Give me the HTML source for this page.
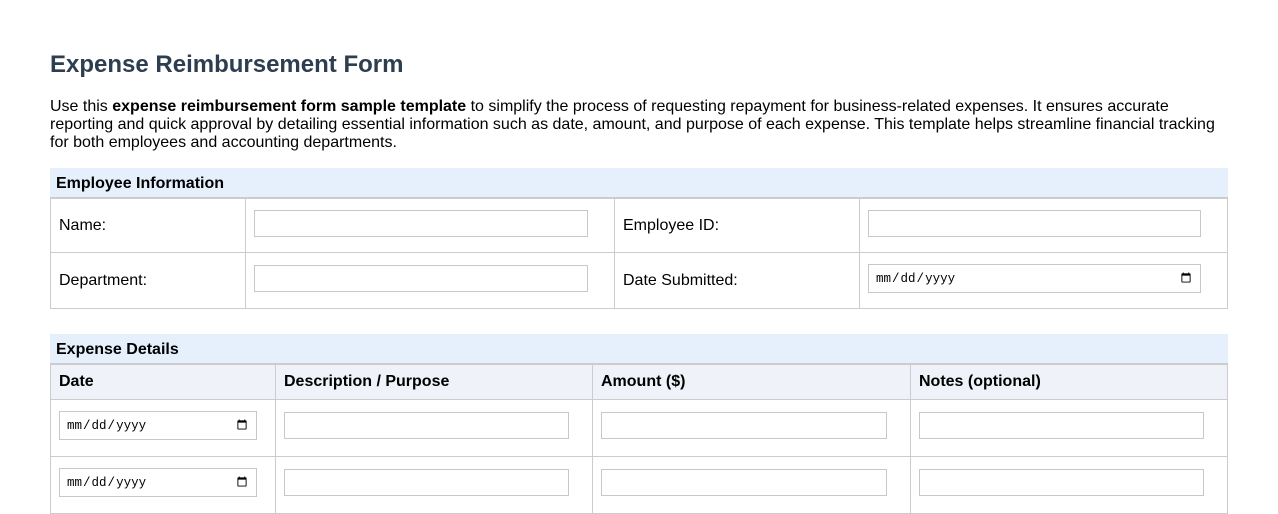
<!DOCTYPE html>
<html><head><meta charset="utf-8"><style>
*{box-sizing:border-box}
body{margin:0;background:#fff;font-family:"Liberation Sans",Arial,sans-serif;color:#000;width:1278px;height:501px;overflow:hidden;position:relative}
h1{position:absolute;left:50px;top:49px;margin:0;font-size:24px;font-weight:bold;color:#2c3e50;line-height:32px}
p{position:absolute;left:50px;top:98px;margin:0;font-size:16px;line-height:18px;white-space:nowrap}
.sec{position:absolute;left:50px;width:1178px;height:30px;background:#e6f0fd;font-weight:bold;font-size:16px;padding:7px 6px 5px;line-height:18px;border-bottom:1px solid #ccc}
.cell{position:absolute;border:1px solid #ccc;font-size:16px;line-height:18px}
.lbl{padding-left:8px;display:flex;align-items:center}
.hd{background:#eff3f9;font-weight:bold;padding-left:8px;display:flex;align-items:center}
.in{position:absolute;border:1px solid #c8c8c8;background:#fff}
input[type=date]{position:absolute;border:1px solid #c8c8c8;background:#fff;font-family:"Liberation Mono",monospace;font-size:12.5px;padding:0 6px;margin:0;color:#000}
</style></head><body>
<h1>Expense Reimbursement Form</h1>
<p>Use this <b>expense reimbursement form sample template</b> to simplify the process of requesting repayment for business-related expenses. It ensures accurate<br>reporting and quick approval by detailing essential information such as date, amount, and purpose of each expense. This template helps streamline financial tracking<br>for both employees and accounting departments.</p>

<div class="sec" style="top:168px">Employee Information</div>
<div class="cell lbl" style="left:50px;top:198px;width:196px;height:55px">Name:</div>
<div class="cell" style="left:245px;top:198px;width:370px;height:55px"></div>
<div class="cell lbl" style="left:614px;top:198px;width:246px;height:55px">Employee ID:</div>
<div class="cell" style="left:859px;top:198px;width:369px;height:55px"></div>
<div class="cell lbl" style="left:50px;top:252px;width:196px;height:57px">Department:</div>
<div class="cell" style="left:245px;top:252px;width:370px;height:57px"></div>
<div class="cell lbl" style="left:614px;top:252px;width:246px;height:57px">Date Submitted:</div>
<div class="cell" style="left:859px;top:252px;width:369px;height:57px"></div>
<div class="in" style="left:254px;top:210px;width:334px;height:27px"></div>
<div class="in" style="left:868px;top:210px;width:333px;height:27px"></div>
<div class="in" style="left:254px;top:265px;width:334px;height:27px"></div>
<input type="date" style="left:868px;top:264px;width:333px;height:29px">

<div class="sec" style="top:334px">Expense Details</div>
<div class="cell hd" style="left:50px;top:364px;width:226px;height:36px">Date</div>
<div class="cell hd" style="left:275px;top:364px;width:318px;height:36px">Description / Purpose</div>
<div class="cell hd" style="left:592px;top:364px;width:319px;height:36px">Amount ($)</div>
<div class="cell hd" style="left:910px;top:364px;width:318px;height:36px">Notes (optional)</div>
<div class="cell" style="left:50px;top:399px;width:226px;height:58px"></div>
<div class="cell" style="left:275px;top:399px;width:318px;height:58px"></div>
<div class="cell" style="left:592px;top:399px;width:319px;height:58px"></div>
<div class="cell" style="left:910px;top:399px;width:318px;height:58px"></div>
<div class="cell" style="left:50px;top:456px;width:226px;height:58px"></div>
<div class="cell" style="left:275px;top:456px;width:318px;height:58px"></div>
<div class="cell" style="left:592px;top:456px;width:319px;height:58px"></div>
<div class="cell" style="left:910px;top:456px;width:318px;height:58px"></div>
<input type="date" style="left:59px;top:411px;width:198px;height:29px">
<div class="in" style="left:284px;top:412px;width:285px;height:27px"></div>
<div class="in" style="left:601px;top:412px;width:286px;height:27px"></div>
<div class="in" style="left:919px;top:412px;width:285px;height:27px"></div>
<input type="date" style="left:59px;top:468px;width:198px;height:29px">
<div class="in" style="left:284px;top:469px;width:285px;height:27px"></div>
<div class="in" style="left:601px;top:469px;width:286px;height:27px"></div>
<div class="in" style="left:919px;top:469px;width:285px;height:27px"></div>
</body></html>
